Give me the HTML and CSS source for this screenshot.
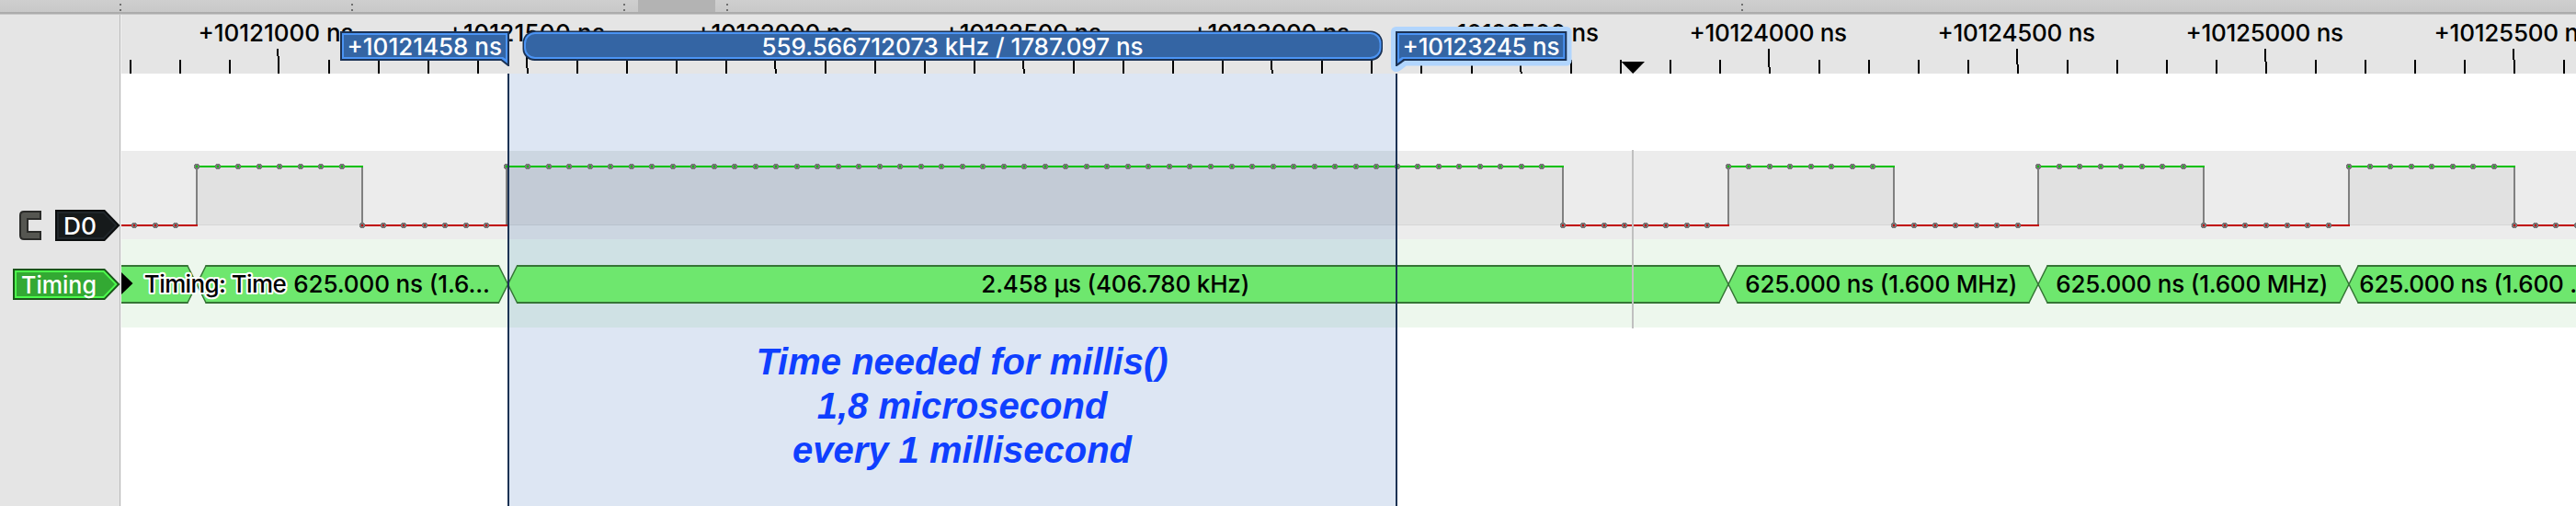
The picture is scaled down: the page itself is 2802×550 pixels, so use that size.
FILE: index.html
```html
<!DOCTYPE html>
<html lang="en">
<head>
<meta charset="utf-8">
<title>Logic analyzer</title>
<link rel="stylesheet" href="styles.css">
</head>
<body>
<div class="overview">
  <svg class="overview-marks" width="2802" height="13" shape-rendering="crispEdges">
    <rect class="overview-window" x="694" y="0" width="84" height="13"/>
    <g id="overview-dots"></g>
  </svg>
</div>
<div class="workspace">
  <aside class="channels">
    <div class="channel channel-d0">
      <svg class="group-icon" width="24" height="32" viewBox="0 0 24 32">
        <path d="M23 1H5Q1 1 1 5V27Q1 31 5 31H23V23H9V9H23Z"/>
      </svg>
      <svg class="tag tag-d0" width="71" height="34" viewBox="0 0 71 34">
        <path class="tag-edge" d="M0 0H54L70.500 17L54 34H0Z"/>
        <path class="tag-rim" d="M2 2H53.200L67.700 17L53.200 32H2Z"/>
        <path class="tag-body" d="M4 4H52.400L65 17L52.400 30H4Z"/>
        <text x="9" y="27" textLength="36" lengthAdjust="spacingAndGlyphs">D0</text>
      </svg>
    </div>
    <div class="channel">
      <svg class="tag tag-timing" width="117" height="34" viewBox="0 0 117 34">
        <path class="tag-edge" d="M0 0H100L116.500 17L100 34H0Z"/>
        <path class="tag-rim" d="M2 2H99.200L113.700 17L99.200 32H2Z"/>
        <path class="tag-body" d="M4 4H98.400L111 17L98.400 30H4Z"/>
        <text x="9" y="27" textLength="82" lengthAdjust="spacingAndGlyphs">Timing</text>
      </svg>
    </div>
  </aside>
  <main class="view">
    <svg class="ruler" width="2670" height="64" viewBox="132 16 2670 64">
      <g id="ruler-scale"></g>
      <path class="hover-mark" d="M1763.500 67H1789L1776.200 80Z"/>
      <g class="flag">
        <path class="flag-edge" d="M370 34H554V72H552.500L545 66H370Z"/>
        <path class="flag-rim" d="M372 36H552V69L545.500 64H372Z"/>
        <path class="flag-body" d="M374 38H550V64L547 62H374Z"/>
        <text x="377.500" y="60" textLength="168.500">+10121458 ns</text>
      </g>
      <g class="flag">
        <rect class="flag-edge" x="568.500" y="33.500" width="935.500" height="32.500" rx="13"/>
        <rect class="flag-rim" x="570" y="35" width="932.500" height="29" rx="12"/>
        <rect class="flag-body" x="572" y="37" width="928.500" height="25" rx="10"/>
        <text x="828.500" y="60" textLength="415">559.566712073 kHz / 1787.097 ns</text>
      </g>
      <g class="flag">
        <path class="flag-halo" d="M1518.500 34.500H1704V66H1528L1519.500 72.500H1518.500Z"/>
        <path class="flag-edge" d="M1518 34H1704.300V66H1528L1519.500 72H1518Z"/>
        <path class="flag-rim" d="M1520 36H1702.300V64H1526.500L1520 69Z"/>
        <path class="flag-body" d="M1522 38H1700.300V62H1525L1522 64Z"/>
        <text x="1525.500" y="60" textLength="171">+10123245 ns</text>
      </g>
    </svg>
    <svg class="traces" width="2670" height="470" viewBox="132 80 2670 470">
      <g shape-rendering="crispEdges">
        <rect class="row-logic" x="132" y="164" width="2670" height="96"/>
        <rect class="row-decode" x="132" y="260" width="2670" height="96"/>
        <rect class="range" x="553" y="80" width="966" height="470"/>
        <rect class="range-logic" x="553" y="164" width="966" height="96"/>
        <rect class="range-decode" x="553" y="260" width="966" height="96"/>
        <g id="wave"></g>
      </g>
      <g id="annotations"></g>
      <g class="annotation-text">
        <text x="319.300" y="318.300" textLength="213.500">625.000 ns (1.6...</text>
        <text x="1067.300" y="318.300" textLength="292">2.458 µs (406.780 kHz)</text>
        <text x="1898.300" y="318.300" textLength="296">625.000 ns (1.600 MHz)</text>
        <text x="2236.300" y="318.300" textLength="296">625.000 ns (1.600 MHz)</text>
        <text x="2566.300" y="318.300" textLength="252">625.000 ns (1.600 ...</text>
        <text class="row-title" x="156.800" y="318.300" textLength="155">Timing: Time</text>
      </g>
      <path class="row-arrow" d="M132 296L144.500 308L132 320Z"/>
      <g shape-rendering="crispEdges">
        <rect class="hover-line" x="1775" y="163" width="2" height="194"/>
        <rect class="cursor-line" x="552" y="80" width="2" height="470"/>
        <rect class="cursor-line" x="1518" y="80" width="2" height="470"/>
      </g>
      <g class="note">
        <text x="1046.500" y="407">Time needed for millis()</text>
        <text x="1046.500" y="455">1,8 microsecond</text>
        <text x="1046.500" y="503">every 1 millisecond</text>
      </g>
    </svg>
  </main>
</div>
<script src="view.js"></script>
</body>
</html>
```

FILE: styles.css
```css
body {
  margin: 0;
  width: 2802px;
  height: 550px;
  overflow: hidden;
  display: flex;
  flex-direction: column;
  background: #fff;
  font-family: Inter, "Liberation Sans", sans-serif;
  font-size: 26px;
  font-weight: 500;
}
svg { display: block; }
text { white-space: pre; }

.overview {
  box-sizing: border-box;
  height: 16px;
  background: linear-gradient(#cfcfcf, #c7c7c7);
  border-bottom: 1px solid #c6c6c6;
  box-shadow: inset 0 -2px #acacac;
}
.overview-window { fill: #b3b3b3; }
.overview-dot { fill: #6f6f6f; }

.workspace { display: flex; height: 534px; }
.channels {
  box-sizing: border-box;
  width: 132px;
  flex: none;
  display: flex;
  flex-direction: column;
  gap: 30px;
  padding-top: 212px;
  background: #e5e5e5;
  border-right: 1px solid #f2f2f2;
  box-shadow: inset -1px 0 #b9b9b9;
}
.channel { display: flex; padding-left: 14px; }
.channel-d0 { padding-left: 21px; gap: 15px; align-items: center; }
.group-icon path { fill: #555651; stroke: #2a2b29; stroke-width: 2; }
.tag text { fill: #fff; }
.tag-d0 .tag-edge { fill: #0b0d0e; }
.tag-d0 .tag-rim { fill: #20262a; }
.tag-d0 .tag-body { fill: #161a1b; }
.tag-timing .tag-edge { fill: #1a551a; }
.tag-timing .tag-rim { fill: #4cfd4c; }
.tag-timing .tag-body { fill: #33a933; }

.view { flex: 1; display: flex; flex-direction: column; }
.ruler { background: #e5e5e5; }
.tick { fill: #000; }
.hover-mark { fill: #000; }
.flag-edge { fill: #1b3254; }
.flag-rim { fill: #4b94f4; }
.flag-body { fill: #3465a4; }
.flag-halo { fill: #b1d5fd; stroke: #b1d5fd; stroke-width: 11; stroke-linejoin: round; }
.flag text { fill: #fff; }

.row-logic { fill: #ececec; }
.row-decode { fill: #edf7ed; }
.range { fill: #dde6f3; }
.range-logic { fill: #ccd6e1; }
.range-decode { fill: #cfe1e4; }
.high-area { fill: #e1e1e1; }
.high-area-range { fill: #c3cbd6; }
.zero-line { fill: #d7d7d7; }
.zero-line-range { fill: #b9c2cd; }
.edge { fill: #808080; }
.high { fill: #00c000; }
.low { fill: #c00000; }
.sample { fill: #787878; }

.annotation { fill: #6ee76e; stroke: #367536; stroke-width: 1.5; }
.annotation-edge { fill: #367536; }
.annotation-text text { fill: #000; }
.annotation-text .row-title { stroke: #fff; stroke-width: 4; stroke-linejoin: round; paint-order: stroke; }
.row-arrow { fill: #000; }
.hover-line { fill: #c0c0c0; }
.cursor-line { fill: #1b3254; }
.note {
  font: italic bold 40px "Liberation Sans", sans-serif;
  fill: #0f3fff;
  text-anchor: middle;
}
```

FILE: view.js
```js
const NS = 'http://www.w3.org/2000/svg';

function add(id, tag, attrs, text) {
  const el = document.createElementNS(NS, tag);
  for (const name in attrs) el.setAttribute(name, attrs[name]);
  if (text) el.textContent = text;
  document.getElementById(id).appendChild(el);
}
function box(id, cls, x, y, width, height) {
  add(id, 'rect', { class: cls, x, y, width, height });
}

// Overview strip markers
for (const x of [130, 382, 678, 790, 1894]) {
  box('overview-dots', 'overview-dot', x, 4, 2, 2);
  box('overview-dots', 'overview-dot', x, 10, 2, 2);
}

// Ruler: minor tick every 100 ns, labelled major tick every 500 ns
const steps = [61, 74, 75, 75, 76, 78, 73, 70, 67, 65];
for (let k = 0; k < 50; k++) {
  const x = Math.floor(141.2 + 54.03 * k);
  if (k % 5 !== 3) {
    box('ruler-scale', 'tick', x, 65, 2, 15);
    continue;
  }
  const n = (k - 3) / 5;
  const major = n === 0 ? 302 : x;
  box('ruler-scale', 'tick', major - 1, 53, 2, steps[n] - 53);
  box('ruler-scale', 'tick', major, steps[n], 2, 80 - steps[n]);
  add('ruler-scale', 'text', { x: major - 86.5, y: 45, textLength: n === 0 ? 169 : 171.5 },
    '+' + (10121000 + 500 * n) + ' ns');
}

// Digital waveform: sample indices between which the line is high
const at = k => Math.round(214 + 22.51 * k);
const pulses = [[0, 8], [15, 66], [74, 82], [89, 97], [104, 112]];
const cursors = [553, 1519];
let previous = 132;
for (const [start, end] of pulses) {
  const a = at(start) - (start === 15 ? 1 : 0);
  const b = at(end);
  box('wave', 'high-area', a, 181, b - a, 64);
  box('wave', 'zero-line', a, 244, b - a, 1);
  if (start === 15) {
    box('wave', 'high-area-range', cursors[0], 181, cursors[1] - cursors[0], 64);
    box('wave', 'zero-line-range', cursors[0], 244, cursors[1] - cursors[0], 1);
  }
  box('wave', 'edge', a - 1, 181, 2, 64);
  box('wave', 'edge', b - 1, 181, 2, 64);
  box('wave', 'low', previous, 244, a + 1 - previous, 2);
  box('wave', 'high', a - 1, 180, b - a + 2, 2);
  previous = b - 1;
}
box('wave', 'low', previous, 244, 2802 - previous, 2);
for (let k = -3; k < 116; k++) {
  const high = pulses.some(([s, e]) => k >= s && k < e);
  const x = at(k) - (k === 15 ? 1 : 0);
  const y = high ? 181 : 245;
  box('wave', 'sample', x - 3, y - 2, 6, 4);
  box('wave', 'sample', x - 2, y - 3, 4, 6);
  box('wave', high ? 'high' : 'low', x - 1, y - 1, 2, 2);
}

// Decoded timing blocks, each tapering to a point at both ends
const bounds = [100, 214, 552.5, 1880, 2217, 2555, 2892];
for (let i = 0; i < bounds.length - 1; i++) {
  const a = bounds[i], b = bounds[i + 1];
  add('annotations', 'path', { class: 'annotation',
    d: `M${a} 309L${a + 10} 289H${b - 10}L${b} 309L${b - 10} 329H${a + 10}Z` });
  box('annotations', 'annotation-edge', a + 9.5, 288, b - a - 19, 2);
  box('annotations', 'annotation-edge', a + 9.5, 328, b - a - 19, 2);
}
```
